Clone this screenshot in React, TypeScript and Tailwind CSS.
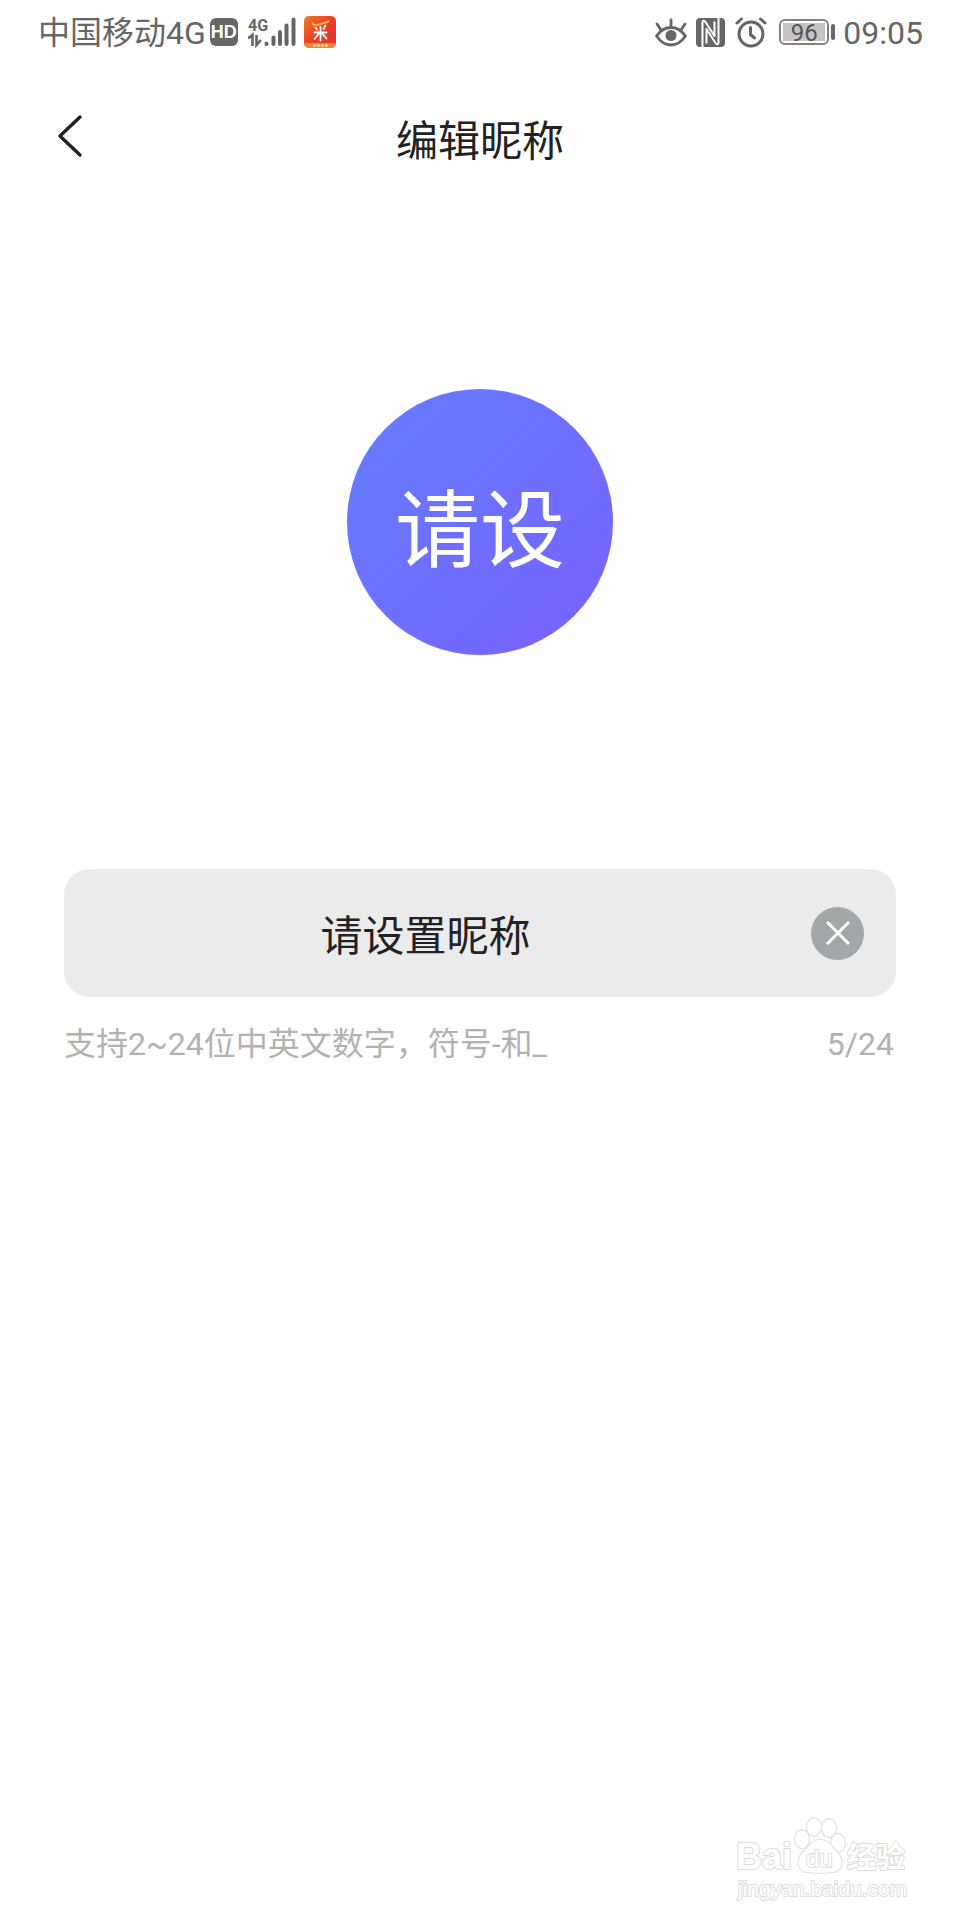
import React, { useRef, useState } from 'react';

const MAX_LENGTH = 24;

function HdBadge() {
  return (
    <span className="flex h-7 w-7 items-center justify-center rounded-md bg-[#666666] font-['Liberation_Sans',sans-serif] text-lg leading-none font-bold text-white">
      HD
    </span>
  );
}

function SignalIcon() {
  return (
    <svg className="h-8 w-12" viewBox="0 0 48 32" role="img" aria-label="4G signal">
      <text x="0" y="15" fontSize="16" fontWeight="700" fill="#666666">4G</text>
      <g fill="none" stroke="#666666" strokeWidth="2.6">
        <path d="M0 22.500l4.500-3.500v11" />
        <path d="M8.500 19v10l4.500-5" />
      </g>
      <g stroke="#666666" strokeWidth="4" strokeLinecap="round">
        <path d="M18.500 27.500v.5" />
        <path d="M25.500 21.500v6.500" />
        <path d="M32 16v12" />
        <path d="M38.500 9.500v18.500" />
        <path d="M45.500 3.500v24.500" />
      </g>
    </svg>
  );
}

function ShopAppIcon() {
  return (
    <svg className="h-8 w-8" viewBox="0 0 32 32" aria-hidden="true">
      <defs>
        <clipPath id="shop-clip">
          <rect width="32" height="32" rx="5" />
        </clipPath>
        <linearGradient id="shop-fill" x1="0" y1="0" x2="1" y2="1">
          <stop offset="0" stopColor="#f2762a" />
          <stop offset="0.5" stopColor="#e9402c" />
          <stop offset="1" stopColor="#e2302d" />
        </linearGradient>
      </defs>
      <g clipPath="url(#shop-clip)">
        <rect width="32" height="32" fill="url(#shop-fill)" />
        <rect y="27" width="32" height="5" fill="#e88a35" />
        <path d="M9 29.500h15" stroke="#fbe3b0" strokeWidth="2" strokeDasharray="3 1" />
        <path d="M8.500 7c0 4 9 1 16-1.500" fill="none" stroke="#f9b846" strokeWidth="2" strokeLinecap="round" />
        <g fill="none" stroke="#ffffff" strokeWidth="1.800" strokeLinecap="round">
          <path d="M11.500 11.500l1.500 2M16.500 11v2M21.500 9.500l-2 3.500" />
          <path d="M10.500 16.500h12M16.500 14.500v10M14.500 18l-4 5M18.500 18l4 4.500" />
        </g>
      </g>
    </svg>
  );
}

function EyeIcon() {
  return (
    <svg className="h-8 w-8" viewBox="0 0 32 32" fill="none" stroke="#666666" strokeWidth="2.8" strokeLinecap="round">
      <path d="M1.500 20C6 13.500 11 11.500 16 11.500s10 2 14.500 8.500C26 26.500 21 29 16 29S6 26.500 1.500 20z" strokeLinejoin="round" />
      <circle cx="16" cy="19.500" r="5.500" fill="#666666" stroke="none" />
      <path d="M16 4v7M2 8l4 6M30 8l-4 6" />
    </svg>
  );
}

function NfcIcon() {
  return (
    <svg className="h-8 w-8" viewBox="0 0 32 32" aria-hidden="true">
      <rect x="1" y="2" width="29" height="29" rx="4" fill="#666666" />
      <g fill="none" stroke="#ffffff" strokeWidth="2" strokeLinejoin="round">
        <path d="M7.500 31V6.500c0-2 1.500-2.500 3-.5l9 14V5.500" />
        <path d="M23.500 2v24.500c0 2-1.500 2.500-3 .5l-9-14v14.500" />
      </g>
    </svg>
  );
}

function AlarmIcon() {
  return (
    <svg className="h-8 w-8" viewBox="0 0 32 32" fill="none" stroke="#666666" strokeWidth="3" strokeLinecap="round">
      <circle cx="16" cy="18" r="12" />
      <path d="M15.500 11.500v7l4 3.500" strokeLinejoin="round" />
      <path d="M2 7l4.500-4M30 7l-4.500-4" />
    </svg>
  );
}

function Battery({ level }: { level: number }) {
  return (
    <div className="flex items-center gap-0.5">
      <div className="h-[26px] w-[50px] rounded-md border-2 border-[#808080] p-0.5">
        <div className="flex h-full items-center justify-center bg-[#c4c4c4] pt-0.5 text-2xl leading-none text-[#555555]">
          {level}
        </div>
      </div>
      <div className="h-4 w-1 rounded-sm bg-[#666666]" />
    </div>
  );
}

function StatusBar() {
  return (
    <div className="flex h-16 items-center justify-between pr-[37px] pl-[38px] text-[32px] leading-none text-[#666666]">
      <div className="flex items-center">
        <span className="mr-1 pt-0.5">中国移动4G</span>
        <HdBadge />
        <span className="mr-2 ml-2.5">
          <SignalIcon />
        </span>
        <ShopAppIcon />
      </div>
      <div className="flex items-center gap-2">
        <EyeIcon />
        <NfcIcon />
        <AlarmIcon />
        <span className="ml-1">
          <Battery level={96} />
        </span>
        <span className="pt-0.5">09:05</span>
      </div>
    </div>
  );
}

function Watermark() {
  return (
    <svg className="h-[88px] w-[176px]" viewBox="0 0 176 88" role="img" aria-label="Baidu 经验">
      <g fill="#ffffff" stroke="#dedede" strokeWidth="2" strokeLinejoin="round" paintOrder="stroke">
        <text x="0" y="53" fontSize="36" fontWeight="700" fontFamily="Liberation Sans">Bai</text>
        <ellipse cx="66" cy="23" rx="7" ry="9" />
        <ellipse cx="78" cy="11" rx="7" ry="9" />
        <ellipse cx="93" cy="12" rx="7" ry="9" />
        <ellipse cx="102" cy="27" rx="7" ry="9" />
        <path d="M84 24c9 0 12 7 17 12 6 6 7 19-4 20-6 1-20 1-26 0-10-1-10-13-5-19 6-5 9-13 18-13z" />
        <text x="70" y="51" fontSize="24" fontFamily="Liberation Sans">du</text>
        <text x="111" y="52" fontSize="29" fontWeight="700">经验</text>
        <text x="2" y="80" fontSize="21" fontFamily="Liberation Sans">jingyan.baidu.com</text>
      </g>
    </svg>
  );
}

export default function App() {
  const [nickname, setNickname] = useState('请设置昵称');
  const inputRef = useRef<HTMLInputElement>(null);

  const handleClear = () => {
    setNickname('');
    inputRef.current?.focus();
  };

  return (
    <div className="flex min-h-screen flex-col bg-[#fefefe] font-[Roboto,'Noto_Sans_CJK_SC',sans-serif]">
      <StatusBar />

      <header className="grid h-[154px] grid-cols-[1fr_auto_1fr] items-start px-12 pt-11">
        <button type="button" aria-label="返回" className="flex h-14 w-12 items-center">
          <svg className="h-12 w-10" viewBox="0 0 40 48" fill="none" stroke="#222222" strokeWidth="3.400" strokeLinecap="round" strokeLinejoin="round">
            <path d="M32 5L12 24l20 19" />
          </svg>
        </button>
        <h1 className="text-[42px] leading-[68px] text-[#222222]">编辑昵称</h1>
      </header>

      <main className="flex flex-col px-16 pt-[171px]">
        <div className="flex h-[266px] w-[266px] items-center justify-center self-center rounded-full bg-linear-to-br from-[#637dff] to-[#7761ff] pt-5 text-[85px] leading-none text-white">
          {nickname.slice(0, 2)}
        </div>

        <div className="mt-[214px] flex h-32 items-center gap-6 rounded-[26px] bg-[#ebebeb] pr-8">
          <input
            ref={inputRef}
            type="text"
            aria-label="昵称"
            aria-describedby="nickname-hint"
            maxLength={MAX_LENGTH}
            value={nickname}
            onChange={(e) => setNickname(e.target.value)}
            className="h-full min-w-0 flex-1 bg-transparent pb-0.5 text-center text-[42px] text-[#222226] outline-none"
          />
          <button
            type="button"
            aria-label="清除"
            onClick={handleClear}
            className="flex h-[53px] w-[53px] items-center justify-center rounded-full bg-[#a5a6a8]"
          >
            <svg className="h-6 w-6" viewBox="0 0 24 24" stroke="#ffffff" strokeWidth="3">
              <path d="M1 1l22 22M23 1L1 23" />
            </svg>
          </button>
        </div>

        <div className="mt-6 flex justify-between pr-0.5 text-[32px] leading-[46px] text-[#b2b2b2]">
          <p id="nickname-hint">支持2~24位中英文数字，符号-和_</p>
          <span>{nickname.length}/{MAX_LENGTH}</span>
        </div>
      </main>

      <footer className="mt-auto flex justify-end pr-12 pb-4">
        <Watermark />
      </footer>
    </div>
  );
}
